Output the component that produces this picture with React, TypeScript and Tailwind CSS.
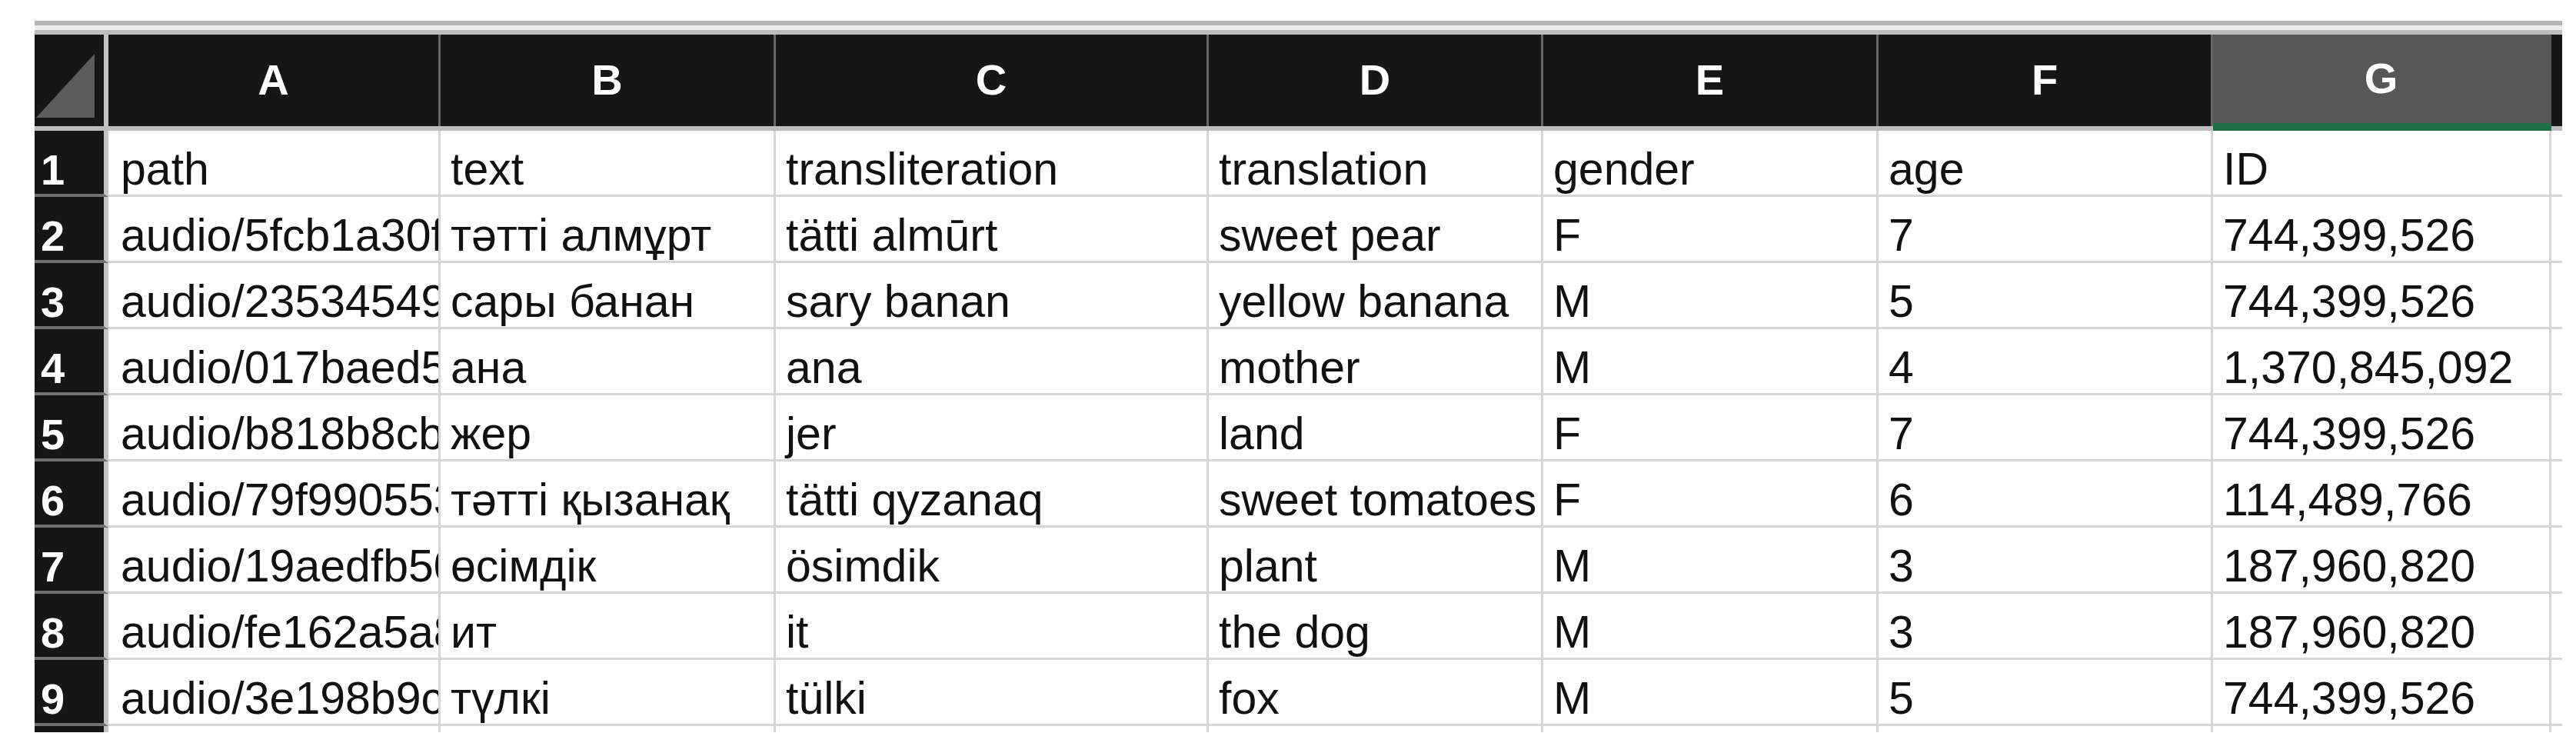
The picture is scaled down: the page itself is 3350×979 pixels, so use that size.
const widths = [
  "w-[432px]",
  "w-[436px]",
  "w-[563px]",
  "w-[435px]",
  "w-[436px]",
  "w-[435px]",
  "w-[440px]",
];

const letters = ["A", "B", "C", "D", "E", "F", "G"];

const rows: string[][] = [
  ["path", "text", "transliteration", "translation", "gender", "age", "ID"],
  ["audio/5fcb1a30f2e1.wav", "тәтті алмұрт", "tätti almūrt", "sweet pear", "F", "7", "744,399,526"],
  ["audio/23534549a7c0.wav", "сары банан", "sary banan", "yellow banana", "M", "5", "744,399,526"],
  ["audio/017baed55e2b.wav", "ана", "ana", "mother", "M", "4", "1,370,845,092"],
  ["audio/b818b8cbd41f.wav", "жер", "jer", "land", "F", "7", "744,399,526"],
  ["audio/79f990553c8a.wav", "тәтті қызанақ", "tätti qyzanaq", "sweet tomatoes", "F", "6", "114,489,766"],
  ["audio/19aedfb50e93.wav", "өсімдік", "ösimdik", "plant", "M", "3", "187,960,820"],
  ["audio/fe162a5a81d6.wav", "ит", "it", "the dog", "M", "3", "187,960,820"],
  ["audio/3e198b9c6f27.wav", "түлкі", "tülki", "fox", "M", "5", "744,399,526"],
];

function HeaderRow() {
  return (
    <div className="flex h-[120px]">
      {/* select-all corner */}
      <div className="relative w-[96px] shrink-0 bg-[#161616] border-r-[6px] border-r-[#c4c4c4]">
        <svg className="absolute left-0 top-0" width="90" height="120" viewBox="0 0 90 120">
          <polygon points="78,25 2,108 78,108" fill="#5c5c5c" />
        </svg>
      </div>
      {letters.map((l, i) => (
        <div
          key={l}
          className={`${widths[i]} shrink-0 flex items-center justify-center text-white font-bold text-[56px] border-r-[3px] ${
            l === "G" ? "bg-[#575757] border-r-[#575757] border-b-[4px] border-b-[#1d7044]" : "bg-[#161616] border-r-[#666666]"
          }`}
        >
          {l}
        </div>
      ))}
      <div className="flex-1 bg-[#161616]" />
    </div>
  );
}

function Separator() {
  return (
    <div className="flex h-[6px] bg-[#bdbdbd]">
      <div className="w-[96px] shrink-0" />
      {widths.map((w, i) => (
        <div key={i} className={`${w} shrink-0 ${i === 6 ? "bg-[#1d7044]" : ""}`} />
      ))}
    </div>
  );
}

export default function App() {
  return (
    <div className="w-[3350px] h-[979px] bg-white pt-[27px] pl-[45px] font-['Liberation_Sans',Arial,sans-serif] text-[#111]">
      <div className="w-[3287px] h-[925px] overflow-hidden flex flex-col">
        {/* top frame lines */}
        <div className="h-[6px] bg-[#b4b4b4]" />
        <div className="h-[6px] bg-[#ececec]" />
        <div className="h-[6px] bg-[#bdbdbd]" />

        <HeaderRow />
        <Separator />

        {rows.map((r, ri) => (
          <div key={ri} className="flex h-[86px] shrink-0">
            <div className="w-[96px] shrink-0 flex items-end bg-[#161616] text-white font-bold text-[56px] leading-[1.1] pl-[8px] border-b-[4px] border-b-[#707070] border-r-[6px] border-r-[#c4c4c4]">
              {ri + 1}
            </div>
            {r.map((c, ci) => (
              <div
                key={ci}
                className={`${widths[ci]} shrink-0 flex items-end overflow-hidden whitespace-nowrap text-[59px] leading-[1.1] ${
                  ci === 0 ? "pl-[16px]" : "pl-[13px]"
                } border-r-[3px] border-b-[3px] border-[#d6d6d6]`}
              >
                {c}
              </div>
            ))}
            <div className="flex-1 border-b-[3px] border-[#d6d6d6]" />
          </div>
        ))}

        {/* partially visible next row */}
        <div className="flex h-[8px] shrink-0">
          <div className="w-[96px] shrink-0 bg-[#161616] border-r-[6px] border-r-[#c4c4c4]" />
          {widths.map((w, i) => (
            <div key={i} className={`${w} shrink-0 border-r-[3px] border-[#d6d6d6]`} />
          ))}
        </div>
      </div>
    </div>
  );
}
